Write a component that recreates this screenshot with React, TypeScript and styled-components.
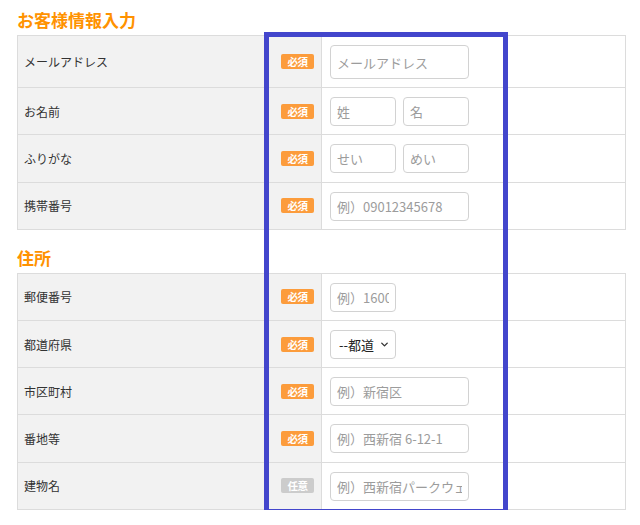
import {ChevronDown} from "lucide-react";
import styled, {createGlobalStyle} from "styled-components";

const GlobalStyle = createGlobalStyle`
    body {
        margin: 0;
        background: #fff;
        font-family: "Noto Sans CJK JP", "Noto Sans", sans-serif;
        color: #333;
    }
`;

const Page = styled.div`
    position: relative;
    padding: 8px 0 0 17px;
    width: 640px;
    box-sizing: border-box;
`;

const Heading = styled.h2<{ $first?: boolean }>`
    margin: ${({$first}) => ($first ? "0" : "16px")} 0 3px;
    font-size: 17px;
    line-height: 24px;
    font-weight: 700;
    color: #ff9200;
`;

const Table = styled.table`
    width: 609px;
    border-collapse: collapse;
    font-size: 12px;
`;

const Row = styled.tr`
    border: 1px solid #dcdcdc;
`;

const Th = styled.th`
    width: 304px;
    padding: 0 7px 0 6px;
    background: #f2f2f2;
    border: 1px solid #dcdcdc;
    font-weight: 400;
    text-align: left;
    box-sizing: border-box;
`;

const ThInner = styled.div`
    display: flex;
    align-items: center;
    justify-content: space-between;
`;

const Badge = styled.span<{ $optional?: boolean }>`
    display: inline-flex;
    align-items: center;
    justify-content: center;
    width: 33px;
    height: 15px;
    border-radius: 2px;
    background: ${({$optional}) => ($optional ? "#cccccc" : "#fc9c3c")};
    color: #fff;
    font-size: 10.5px;
    font-weight: 700;
    letter-spacing: -0.5px;
`;

const Td = styled.td`
    padding: 9px 8px 8.2px;
    border: 1px solid #dcdcdc;
    background: #fff;
`;

const Fields = styled.div`
    display: flex;
    gap: 7px;
`;

const Input = styled.input<{ $half?: boolean; $tall?: boolean }>`
    display: block;
    width: ${({$half}) => ($half ? "66px" : "139px")};
    height: ${({$tall}) => ($tall ? "34px" : "29px")};
    box-sizing: border-box;
    padding: 0 6px;
    border: 1px solid #d2d2d2;
    border-radius: 4px;
    font-family: "Noto Sans CJK JP", "Noto Sans", sans-serif;
    font-size: 13px;
    color: #333;
    outline: none;

    &::placeholder {
        color: #9c9c9c;
    }
`;

const SelectWrap = styled.div`
    position: relative;
    width: 66px;
    height: 29px;

    svg {
        position: absolute;
        right: 6px;
        top: 9px;
        pointer-events: none;
    }
`;

const Select = styled.select`
    appearance: none;
    display: block;
    width: 100%;
    height: 100%;
    box-sizing: border-box;
    padding: 0 21px 0 8px;
    border: 1px solid #d2d2d2;
    border-radius: 4px;
    background: #fff;
    font-family: "Noto Sans CJK JP", "Noto Sans", sans-serif;
    font-size: 13px;
    color: #222;
    white-space: nowrap;
`;

const Highlight = styled.div`
    position: absolute;
    left: 264px;
    top: 32px;
    width: 244px;
    height: 482px;
    box-sizing: border-box;
    border: 5px solid #4346cc;
    pointer-events: none;
`;

const Label = ({text, optional}: { text: string; optional?: boolean }) => (
    <Th>
        <ThInner>
            <span>{text}</span>
            <Badge $optional={optional}>{optional ? "任意" : "必須"}</Badge>
        </ThInner>
    </Th>
);

const App = () => {
    return (
        <>
            <GlobalStyle/>
            <Page>
                <Heading $first>お客様情報入力</Heading>
                <Table>
                    <tbody>
                    <Row>
                        <Label text="メールアドレス"/>
                        <Td><Input $tall placeholder="メールアドレス"/></Td>
                    </Row>
                    <Row>
                        <Label text="お名前"/>
                        <Td>
                            <Fields>
                                <Input $half placeholder="姓"/>
                                <Input $half placeholder="名"/>
                            </Fields>
                        </Td>
                    </Row>
                    <Row>
                        <Label text="ふりがな"/>
                        <Td>
                            <Fields>
                                <Input $half placeholder="せい"/>
                                <Input $half placeholder="めい"/>
                            </Fields>
                        </Td>
                    </Row>
                    <Row>
                        <Label text="携帯番号"/>
                        <Td><Input placeholder="例）09012345678"/></Td>
                    </Row>
                    </tbody>
                </Table>

                <Heading>住所</Heading>
                <Table>
                    <tbody>
                    <Row>
                        <Label text="郵便番号"/>
                        <Td><Input $half placeholder="例）1600023"/></Td>
                    </Row>
                    <Row>
                        <Label text="都道府県"/>
                        <Td>
                            <SelectWrap>
                                <Select defaultValue="">
                                    <option value="">--都道府県--</option>
                                    <option value="tokyo">東京都</option>
                                </Select>
                                <ChevronDown size={11} strokeWidth={3} color="#333"/>
                            </SelectWrap>
                        </Td>
                    </Row>
                    <Row>
                        <Label text="市区町村"/>
                        <Td><Input placeholder="例）新宿区"/></Td>
                    </Row>
                    <Row>
                        <Label text="番地等"/>
                        <Td><Input placeholder="例）西新宿 6-12-1"/></Td>
                    </Row>
                    <Row>
                        <Label text="建物名" optional/>
                        <Td><Input placeholder="例）西新宿パークウェスト"/></Td>
                    </Row>
                    </tbody>
                </Table>
                <Highlight/>
            </Page>
        </>
    );
};

export default App;
